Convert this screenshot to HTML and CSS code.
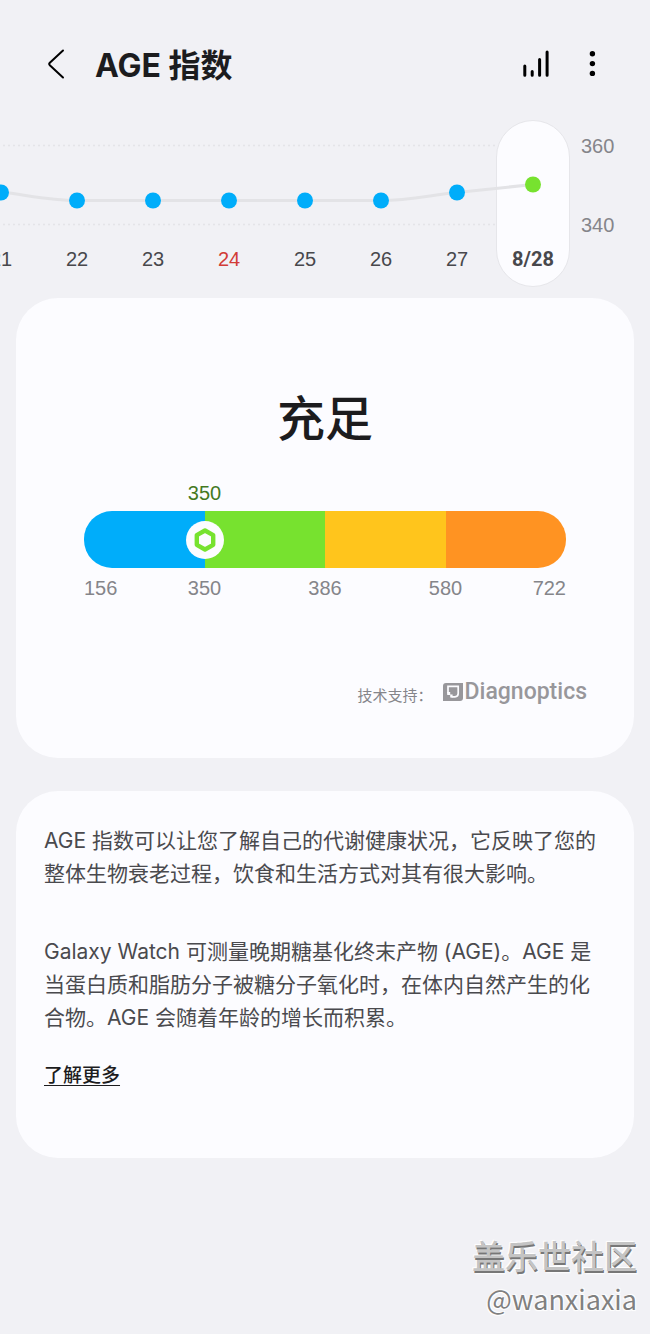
FILE: index.html
```
<!DOCTYPE html>
<html lang="zh-CN">

<head>
	<meta charset="UTF-8">
	<meta name="viewport" content="width=device-width, initial-scale=1">
	<title>AGE 指数</title>
	<link rel="stylesheet" href="styles.css">
</head>

<body>
	<header class="topbar">
		<button type="button" class="icon-btn" aria-label="返回">
			<svg width="32" height="32" viewBox="0 0 32 32" fill="none" stroke="#000" stroke-width="2" stroke-linecap="round" stroke-linejoin="round">
				<path d="M23 2.5L9.8 14.8Q8.6 16 9.8 17.2L23 29.5" />
			</svg>
		</button>
		<h1>AGE 指数</h1>
		<button type="button" class="icon-btn" aria-label="统计">
			<svg width="32" height="32" viewBox="0 0 32 32" stroke="#000" stroke-width="3" stroke-linecap="round">
				<path d="M4.8 18V27.2M12.2 23.5V27.2M19.6 11.5V27.2M27.1 4V27.2" />
			</svg>
		</button>
		<button type="button" class="icon-btn" aria-label="更多选项">
			<svg width="32" height="32" viewBox="0 0 32 32">
				<circle cx="16.4" cy="5.8" r="2.7" />
				<circle cx="16.4" cy="15.6" r="2.7" />
				<circle cx="16.4" cy="25.4" r="2.7" />
			</svg>
		</button>
	</header>

	<section class="trend">
		<div class="chart">
			<div class="strip">
				<ul class="days">
					<li>21</li>
					<li>22</li>
					<li>23</li>
					<li class="sunday">24</li>
					<li>25</li>
					<li>26</li>
					<li>27</li>
					<li class="selected">8/28</li>
				</ul>
				<svg class="plot" width="608" height="167" viewBox="0 0 608 167" fill="none">
					<path d="M0 25.5H533M0 104.5H533" stroke="#e4e4e8" stroke-width="1.4" stroke-dasharray="2 3" />
					<path d="M38 72C64 75 86 80.5 114 80.5H418C446 80.5 468 75 494 72.5L570 64.5" stroke="#e3e3e6" stroke-width="3" />
					<g fill="#00adfa">
						<circle cx="38" cy="72.5" r="8" />
						<circle cx="114" cy="80.5" r="8" />
						<circle cx="190" cy="80.5" r="8" />
						<circle cx="266" cy="80.5" r="8" />
						<circle cx="342" cy="80.5" r="8" />
						<circle cx="418" cy="80.5" r="8" />
						<circle cx="494" cy="72.5" r="8" />
					</g>
					<circle cx="570" cy="64.5" r="8" fill="#77e22f" />
				</svg>
			</div>
		</div>
		<div class="axis">
			<span>360</span>
			<span>340</span>
		</div>
	</section>

	<main>
		<section class="card result">
			<h2>充足</h2>
			<div class="gauge">
				<div class="scale">
					<span class="current">350</span>
				</div>
				<div class="bar">
					<i class="blue"></i>
					<i class="green"></i>
					<i class="yellow"></i>
					<i class="orange"></i>
					<svg class="marker" width="38" height="38" viewBox="0 0 38 38">
						<circle cx="19" cy="19" r="19" fill="#fcfcff" />
						<path d="M19 9.5L27.2 14.2V23.8L19 28.5L10.8 23.8V14.2Z" fill="none" stroke="#77e22f" stroke-width="4.4" stroke-linejoin="round" />
					</svg>
				</div>
				<div class="scale">
					<span>156</span>
					<span>350</span>
					<span>386</span>
					<span>580</span>
					<span>722</span>
				</div>
			</div>
			<div class="powered">
				<span>技术支持：</span>
				<div class="brand">
					<svg width="20" height="18" viewBox="0 0 20 18">
						<path d="M3 0H20V15Q20 18 17 18H0V3Q0 0 3 0Z" fill="#98979b" />
						<path d="M5 10.5V3.4H15.2V10.6Q15.2 13.8 12 13.8H8.5" fill="none" stroke="#fcfcff" stroke-width="1.7" />
						<path d="M4.2 9H7.2V11.4H9.6V14.6H7.2V12H4.2Z" fill="#fcfcff" />
					</svg>
					Diagnoptics
				</div>
			</div>
		</section>

		<section class="card info">
			<p>AGE 指数可以让您了解自己的代谢健康状况，它反映了您的整体生物衰老过程，饮食和生活方式对其有很大影响。</p>
			<p>Galaxy Watch 可测量晚期糖基化终末产物 (AGE)。AGE 是当蛋白质和脂肪分子被糖分子氧化时，在体内自然产生的化合物。AGE 会随着年龄的增长而积累。</p>
			<a href="#">了解更多</a>
		</section>
	</main>

	<footer class="watermark">
		<strong>盖乐世社区</strong>
		<span>@wanxiaxia</span>
	</footer>
</body>

</html>
```
FILE: styles.css
```
:root {
	--background: #f1f1f5;
	--card: #fcfcff;
	--text: #1c1c1e;
	--muted: #85858a;
	--digits: "Liberation Sans", sans-serif;
}

* {
	padding: 0;
	margin: 0;
	box-sizing: border-box;
}

body {
	background-color: var(--background);
	color: var(--text);
	font-family: Inter, "Noto Sans CJK SC", sans-serif;
	min-height: 100vh;
	display: flex;
	flex-flow: column nowrap;
}

.topbar {
	display: flex;
	align-items: center;
	padding: 40px 42px 32px 40px;
	height: 120px;
}

.topbar h1 {
	flex: 1;
	margin-left: 23px;
	padding-top: 4px;
	font-size: 32px;
	line-height: 44px;
}

.icon-btn {
	width: 32px;
	height: 32px;
	border: none;
	background: none;
}

.icon-btn + .icon-btn {
	margin-left: 24px;
}

.icon-btn svg {
	display: block;
}

/* day strip: the newest day sits on the right, older ones run off the left edge */
.trend {
	display: flex;
}

.chart {
	flex: 1;
	min-width: 0;
	overflow: hidden;
	display: flex;
	justify-content: flex-end;
}

.strip {
	flex: none;
	display: grid;
}

.days,
.plot {
	grid-area: 1 / 1;
}

.plot {
	z-index: 1;
}

.days {
	display: grid;
	grid-template-columns: repeat(8, 76px);
	list-style: none;
	font-family: var(--digits);
	font-size: 20px;
	line-height: 24px;
	text-align: center;
	color: #48484c;
}

.days li {
	padding-top: 127px;
}

.days .sunday {
	color: #d23c37;
}

.days .selected {
	margin: 0 1px;
	padding-top: 126px;
	border: 1px solid #e6e6ea;
	border-radius: 37px;
	background-color: var(--card);
	font-family: Roboto, sans-serif;
	font-weight: bold;
}

.axis {
	flex: 0 0 79px;
	display: flex;
	flex-flow: column nowrap;
	gap: 55px;
	padding: 14px 0 0 10px;
	font-family: var(--digits);
	font-size: 20px;
	line-height: 24px;
	color: var(--muted);
}

main {
	display: flex;
	flex-flow: column nowrap;
	gap: 33px;
	padding: 11px 16px 0;
}

.card {
	background-color: var(--card);
	border-radius: 42px;
}

.result {
	padding: 85px 28px 44px;
}

.result h2 {
	font-size: 48px;
	font-weight: 500;
	line-height: 72px;
	text-align: center;
}

.gauge {
	margin: 26px 40px 0;
}

.scale {
	display: grid;
	grid-template-columns: 1fr 2fr 2fr 2fr 1fr;
	font-family: var(--digits);
	font-size: 20px;
	line-height: 24px;
	text-align: center;
	color: var(--muted);
}

.scale .current {
	grid-column: 2;
	color: #44791f;
	margin-bottom: 6px;
}

.scale span:first-child:not(.current) {
	text-align: left;
}

.scale span:nth-child(5) {
	text-align: right;
}

.bar {
	position: relative;
	display: flex;
	height: 57px;
	margin-bottom: 8px;
}

.bar i {
	flex: 1;
}

.blue {
	background-color: #00adfa;
	border-radius: 28px 0 0 28px;
}

.green {
	background-color: #77e22f;
}

.yellow {
	background-color: #ffc51c;
}

.orange {
	background-color: #ff9322;
	border-radius: 0 28px 28px 0;
}

.marker {
	position: absolute;
	left: 25%;
	top: 50%;
	transform: translate(-50%, -50%);
}

.powered {
	display: flex;
	align-items: baseline;
	justify-content: flex-end;
	gap: 10px;
	margin: 74px 19px 0 0;
	font-size: 15px;
	line-height: 36px;
	color: var(--muted);
}

.brand {
	display: flex;
	align-items: center;
	gap: 2px;
	font-family: Roboto, sans-serif;
	font-size: 23px;
	font-weight: 500;
	color: #98979b;
}

.info {
	padding: 33px 28px 66px;
	font-size: 21px;
	line-height: 33px;
	color: #4a4a4e;
}

.info p + p {
	margin: 45px 0 24px;
}

.info a {
	display: inline-block;
	font-size: 19px;
	font-weight: 500;
	color: var(--text);
	text-underline-offset: 3px;
}

.watermark {
	margin-top: auto;
	padding: 0 13px 13px;
	display: flex;
	flex-flow: column nowrap;
	align-items: flex-end;
	font-family: "Noto Sans CJK SC", sans-serif;
	line-height: 44px;
}

.watermark strong {
	font-size: 33px;
	font-weight: 500;
	color: #c4c4c4;
	text-shadow: 1px 2px 0 #777, -1px -1px 1px #fff, 2px 3px 2px #fff;
}

.watermark span {
	font-size: 27px;
	color: #808080;
	text-shadow: 1px -1px 1px #fff, -1px 1px 1px #fff, 1px 1px 1px #fff;
}
```
